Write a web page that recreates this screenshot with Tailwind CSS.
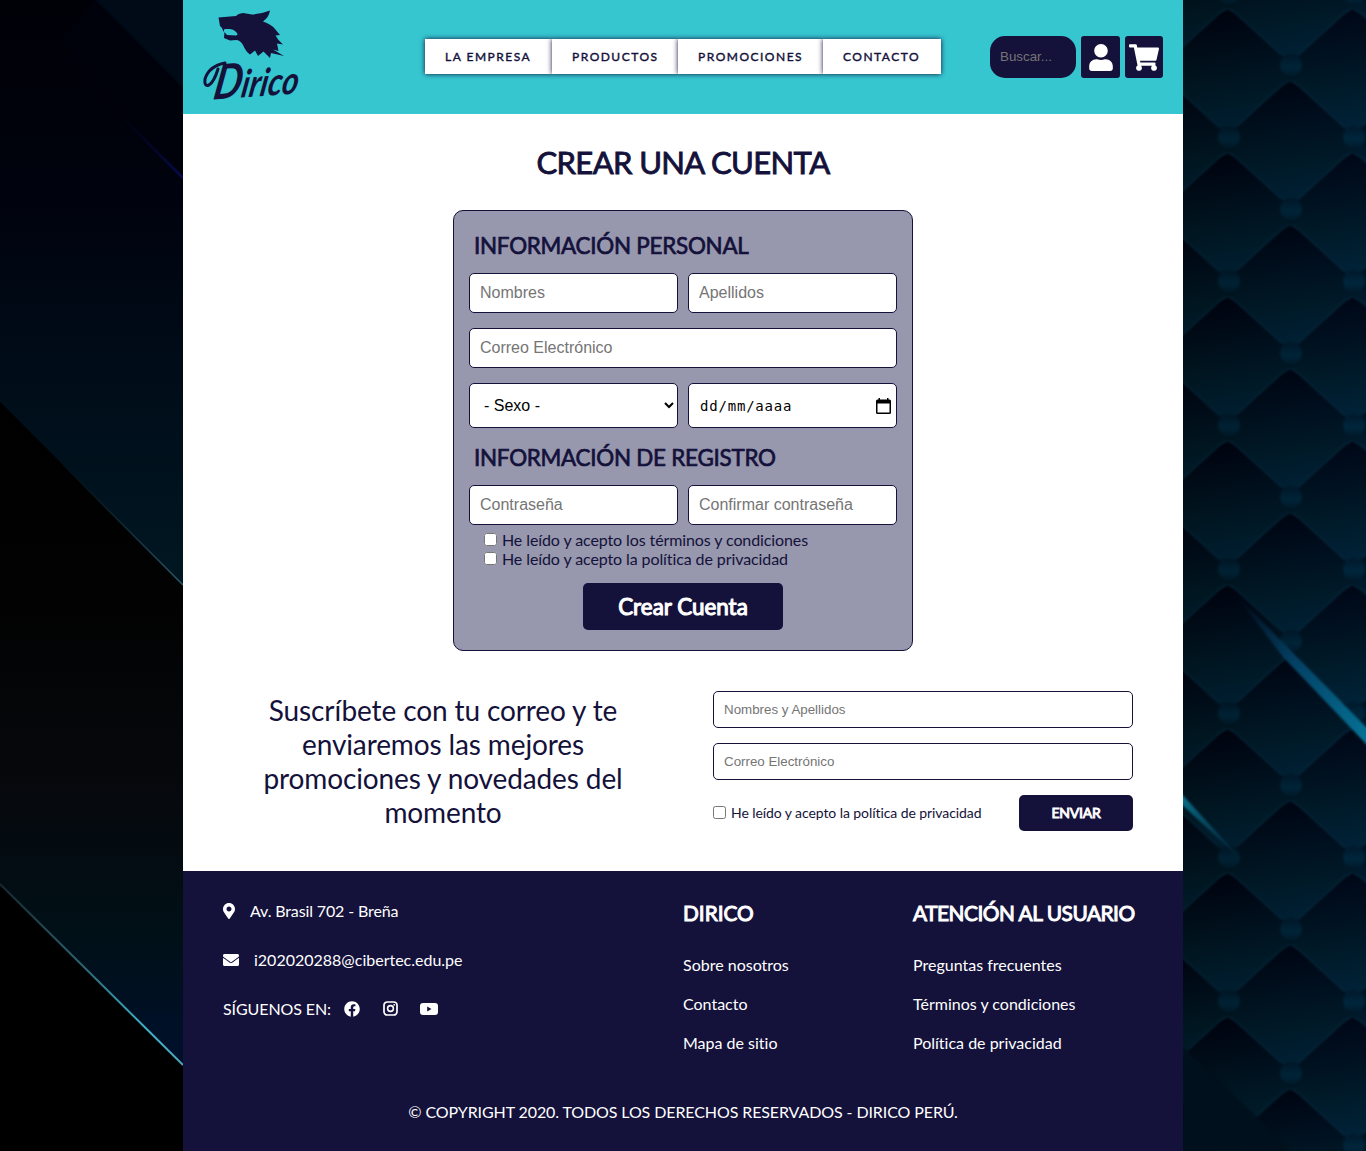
<!DOCTYPE html>
<html lang="es">
<head>
<meta charset="utf-8">
<title>Dirico - Crear una cuenta</title>
<script src="https://cdn.jsdelivr.net/npm/@tailwindcss/browser@4"></script>
</head>
<body class="relative h-[1151px] overflow-hidden bg-black font-['Lato',sans-serif] text-base leading-[19px] text-[#14113a] [font-variant-ligatures:none]">
<!-- Decorative background -->
<svg class="absolute inset-0 -z-0" width="1366" height="1151" aria-hidden="true">
  <defs>
    <linearGradient id="la" x1="0" y1="0" x2="0" y2="1"><stop offset="0" stop-color="#000107"/><stop offset=".35" stop-color="#00030e"/><stop offset=".65" stop-color="#000d19"/><stop offset="1" stop-color="#001722"/></linearGradient>
    <linearGradient id="lb" x1="0" y1="0" x2="0" y2="1"><stop offset="0" stop-color="#000"/><stop offset=".3" stop-color="#020202"/><stop offset=".6" stop-color="#06090d"/><stop offset=".8" stop-color="#001017"/><stop offset="1" stop-color="#00102c"/></linearGradient>
    <linearGradient id="l1" gradientUnits="userSpaceOnUse" x1="0" y1="402" x2="183" y2="585"><stop offset=".3" stop-color="#12303c" stop-opacity="0"/><stop offset="1" stop-color="#2b5c6c"/></linearGradient>
    <linearGradient id="l2" gradientUnits="userSpaceOnUse" x1="0" y1="884" x2="183" y2="1065"><stop offset="0" stop-color="#16272e"/><stop offset=".45" stop-color="#2c6472"/><stop offset=".8" stop-color="#3fb4c8"/><stop offset="1" stop-color="#4da3b8"/></linearGradient>
    <linearGradient id="l3" gradientUnits="userSpaceOnUse" x1="120" y1="115" x2="183" y2="178"><stop offset="0" stop-color="#05063a" stop-opacity="0"/><stop offset="1" stop-color="#070a48"/></linearGradient>
    <linearGradient id="hx" gradientUnits="userSpaceOnUse" x1="0" y1="0" x2="0" y2="129"><stop offset="0" stop-color="#00020b"/><stop offset=".12" stop-color="#000512"/><stop offset=".35" stop-color="#000e1b"/><stop offset=".65" stop-color="#001a26"/><stop offset="1" stop-color="#002338"/></linearGradient>
    <linearGradient id="st" x1="0" y1="0" x2="0" y2="1"><stop offset="0" stop-color="#001626"/><stop offset=".6" stop-color="#00263a"/><stop offset="1" stop-color="#001a2a"/></linearGradient>
    <!-- One upholstery cell, hung from its top point -->
    <g id="cell">
      <path d="M0 0L62.500 57V72L0 129L-62.500 72V57Z" fill="url(#hx)"/>
      <path d="M-54 49L-8 7L0 2L8 7L54 49" fill="none" stroke="#04283a" stroke-width="1.500"/>
    </g>
    <pattern id="quilt" patternUnits="userSpaceOnUse" x="1165" y="6" width="125" height="144">
      <rect width="125" height="144" fill="#00121e"/>
      <use href="#cell" x="0" y="-72"/><use href="#cell" x="125" y="-72"/>
      <use href="#cell" x="62.500" y="0"/>
      <use href="#cell" x="0" y="72"/><use href="#cell" x="125" y="72"/>
      <ellipse cx="64" cy="131" rx="11" ry="11" fill="url(#st)"/>
      <ellipse cx="1" cy="59" rx="11" ry="11" fill="url(#st)"/>
      <ellipse cx="126" cy="59" rx="11" ry="11" fill="url(#st)"/>
    </pattern>
    <linearGradient id="s1" gradientUnits="userSpaceOnUse" x1="1235" y1="596" x2="1366" y2="738"><stop offset="0" stop-color="#033555" stop-opacity="0"/><stop offset=".45" stop-color="#04466c"/><stop offset="1" stop-color="#067fa2"/></linearGradient>
    <linearGradient id="s2" gradientUnits="userSpaceOnUse" x1="1183" y1="799" x2="1238" y2="856"><stop offset="0" stop-color="#0a7f9e"/><stop offset="1" stop-color="#053550" stop-opacity=".6"/></linearGradient>
    <linearGradient id="fade" x1="0" y1="0" x2="1" y2="0"><stop offset="0" stop-color="#000" stop-opacity=".15"/><stop offset="1" stop-color="#00264a" stop-opacity=".15"/></linearGradient>
    <filter id="soft" color-interpolation-filters="sRGB"><feGaussianBlur stdDeviation="1"/></filter>
  </defs>
  <path d="M0 0H183V585L0 402Z" fill="url(#la)"/>
  <path d="M95 0H183V88Z" fill="#000b17"/>
  <path d="M95 0L183 88V178L120 115L60 40Z" fill="#00020b" filter="url(#soft)"/>
  <path d="M120 115L183 178" stroke="url(#l3)" stroke-width="3"/>
  <path d="M0 402L183 585V1065L0 884Z" fill="url(#lb)"/>
  <path d="M0 402L183 585" stroke="url(#l1)" stroke-width="1.500"/>
  <path d="M0 884L183 1065" stroke="url(#l2)" stroke-width="2"/>
  <g filter="url(#soft)">
    <rect x="1175" y="-5" width="200" height="1165" fill="url(#quilt)"/>
    <path d="M1235 594L1370 731V748L1283 657Z" fill="url(#s1)"/>
    <path d="M1180 792L1240 858L1180 803Z" fill="url(#s2)"/>
  </g>
  <rect x="1183" width="183" height="1151" fill="url(#fade)"/>
  <path d="M1183 1047L1260 1120L1290 1151H1183Z" fill="#00101c" filter="url(#soft)"/>
</svg>

<div class="relative mx-auto flex h-[1151px] w-[1000px] flex-col bg-white">
  <header class="flex h-[114px] shrink-0 items-start bg-[#36c6d0] px-5">
    <svg class="mt-[7px] h-[100px] w-[100px] shrink-0 overflow-visible" viewBox="20 7 100 100" role="img" aria-label="Dirico">
      <path fill="#14113a" d="M35.500 17.500L53 16Q55 13.500 60 13L69 14.500Q78 14 87 10.500Q86 17 80 21.500Q88 24 92 29L97 35L92.500 35.500L95.500 40L100 44.500L94 43.500L95.500 51L90 49.500L101 56L88 53L87 58L80.500 51.500L75 56L72 50.500L67 54.500Q63 52 60 45Q57 40 53 40L47 40.500L41 38L41.500 32L44 35L53 35.500Q56 34.500 53 32Q50 28.500 45 29L41.500 29L40.500 32L39 28L37 26Z"/>
      <!-- Flourish to the left of the wordmark -->
      <path d="M42 63Q26 66 22 79Q21 87 26 85Q31 82 35 69" fill="none" stroke="#14113a" stroke-width="3" stroke-linecap="round"/>
      <text transform="translate(29 99.500) rotate(-4) skewX(-14)" fill="#14113a" font-family="Lato" font-style="italic" font-weight="700" font-size="38" textLength="85" lengthAdjust="spacingAndGlyphs"><tspan font-size="48">D</tspan><tspan>irico</tspan></text>
    </svg>
    <nav class="mt-[39px] ml-[122px] flex h-[35px] w-[516px] shrink-0 text-xs leading-[35px] tracking-[1.500px] [-webkit-text-stroke:0.400px_#14113a]">
      <a class="w-[127px] bg-white pl-5 shadow-[0_0_5px_#14113a]">LA EMPRESA</a>
      <a class="w-[126px] bg-white pl-5 shadow-[0_0_5px_#14113a]">PRODUCTOS</a>
      <a class="w-[145px] bg-white pl-5 shadow-[0_0_5px_#14113a]">PROMOCIONES</a>
      <a class="w-[118px] bg-white pl-5 shadow-[0_0_5px_#14113a]">CONTACTO</a>
    </nav>
    <div class="mt-9 ml-auto flex h-[42px] gap-[5px]">
      <input class="w-[86px] rounded-[15px] bg-[#14113a] px-2.5 pb-0.5 font-['Liberation_Sans',sans-serif] text-[13.333px] placeholder:text-[#757575]" placeholder="Buscar...">
      <a class="flex w-[39px] items-center justify-center rounded-[3px] bg-[#14113a]"><svg class="h-[27px] w-6 fill-white" viewBox="0 0 448 512"><path d="M224 256c70.700 0 128-57.300 128-128S294.700 0 224 0 96 57.300 96 128s57.300 128 128 128zm89.600 32h-16.700c-22.200 10.200-46.900 16-72.900 16s-50.600-5.800-72.900-16h-16.700C60.200 288 0 348.200 0 422.400V464c0 26.500 21.500 48 48 48h352c26.500 0 48-21.500 48-48v-41.600c0-74.200-60.200-134.400-134.400-134.400z"/></svg></a>
      <a class="flex w-[38px] items-center justify-center rounded-[3px] bg-[#14113a]"><svg class="h-[27px] w-[30px] fill-white" viewBox="0 0 576 512"><path d="M528.120 301.319l47.273-208C578.806 78.301 567.391 64 551.990 64H159.208l-9.166-44.810C147.758 8.021 137.930 0 126.529 0H24C10.745 0 0 10.745 0 24v16c0 13.255 10.745 24 24 24h69.883l70.248 343.435C147.325 417.100 136 435.222 136 456c0 30.928 25.072 56 56 56s56-25.072 56-56c0-15.674-6.447-29.835-16.824-40h209.647C430.447 426.165 424 440.326 424 456c0 30.928 25.072 56 56 56s56-25.072 56-56c0-22.172-12.888-41.332-31.579-50.405l5.517-24.276c3.413-15.018-8.002-29.319-23.403-29.319H218.117l-6.545-32h293.145c11.206 0 20.920-7.754 23.403-18.681z"/></svg></a>
    </div>
  </header>

  <main class="flex h-[757px] shrink-0 flex-col items-center">
    <h1 class="mt-[29px] text-[31px] leading-[38px] tracking-[-0.620px] [-webkit-text-stroke:0.900px_#14113a]">CREAR UNA CUENTA</h1>
    <form class="mt-[29px] flex h-[441px] w-[460px] flex-col rounded-[10px] border border-[#14113a] bg-[#9797ad] px-[15px]">
      <h2 class="mt-[21px] pl-[5px] text-[22.400px] leading-[27px] tracking-[-0.250px] [-webkit-text-stroke:0.700px_#14113a]">INFORMACIÓN PERSONAL</h2>
      <div class="mt-3.5 grid grid-cols-2 gap-x-2.5 gap-y-[15px] font-['Liberation_Sans',sans-serif] text-base">
        <input class="h-10 min-w-0 rounded-[5px] border border-[#14113a] bg-white px-2.5 placeholder:text-[#757575]" placeholder="Nombres">
        <input class="h-10 min-w-0 rounded-[5px] border border-[#14113a] bg-white px-2.5 placeholder:text-[#757575]" placeholder="Apellidos">
        <input class="col-span-2 h-10 rounded-[5px] border border-[#14113a] bg-white px-2.5 placeholder:text-[#757575]" placeholder="Correo Electrónico">
        <select class="h-[45px] rounded-[5px] border border-[#14113a] bg-white pl-2.5 text-black"><option>- Sexo -</option></select>
        <div class="flex h-[45px] items-center justify-between rounded-[5px] border border-[#14113a] bg-white pr-[5px] pl-[11px] text-black">
          <span class="font-['DejaVu_Sans_Mono',monospace] text-sm tracking-[0.800px]">dd/mm/aaaa</span>
          <svg class="h-4 w-[15px]" viewBox="0 0 15 16"><path fill-rule="evenodd" d="M2.500 0H4V1.500H11V0H12.500V1.500H13.500Q15 1.500 15 3V14.500Q15 16 13.500 16H1.500Q0 16 0 14.500V3Q0 1.500 1.500 1.500H2.500ZM1.500 5.500V14.500H13.500V5.500Z"/></svg>
        </div>
      </div>
      <h2 class="mt-4 pl-[5px] text-[22.400px] leading-[27px] tracking-[-0.250px] [-webkit-text-stroke:0.700px_#14113a]">INFORMACIÓN DE REGISTRO</h2>
      <div class="mt-3.5 grid grid-cols-2 gap-2.5 font-['Liberation_Sans',sans-serif]">
        <input class="h-10 min-w-0 rounded-[5px] border border-[#14113a] bg-white px-2.5 placeholder:text-[#757575]" placeholder="Contraseña">
        <input class="h-10 min-w-0 rounded-[5px] border border-[#14113a] bg-white px-2.5 placeholder:text-[#757575]" placeholder="Confirmar contraseña">
      </div>
      <div class="mt-[5px] pl-[15px] tracking-[-0.100px]">
        <label class="flex h-[19px] items-center"><input type="checkbox" class="mr-[5px] h-[13px] w-[13px]">He leído y acepto los términos y condiciones</label>
        <label class="flex h-[19px] items-center"><input type="checkbox" class="mr-[5px] h-[13px] w-[13px]">He leído y acepto la política de privacidad</label>
      </div>
      <button type="button" class="mt-[15px] h-[47px] w-[200px] self-center rounded-[5px] bg-[#14113a] text-[22.400px] text-white [-webkit-text-stroke:1.100px_#fff]">Crear Cuenta</button>
    </form>

    <section class="mt-10 flex w-full justify-between pr-[50px] pl-[60px]">
      <p class="mt-0.5 w-[400px] text-center text-[28px] leading-[34px] tracking-[-0.120px]">Suscríbete con tu correo y te enviaremos las mejores promociones y novedades del momento</p>
      <div class="flex w-[420px] flex-col gap-[15px]">
        <input class="h-[37px] rounded-[5px] border border-[#14113a] px-2.5 font-['Liberation_Sans',sans-serif] text-[13.333px] placeholder:text-[#757575]" placeholder="Nombres y Apellidos">
        <input class="h-[37px] rounded-[5px] border border-[#14113a] px-2.5 font-['Liberation_Sans',sans-serif] text-[13.333px] placeholder:text-[#757575]" placeholder="Correo Electrónico">
        <div class="flex h-9 items-center justify-between text-sm">
          <label class="flex items-center tracking-[-0.080px]"><input type="checkbox" class="mr-[5px] mb-px h-[13px] w-[13px]">He leído y acepto la política de privacidad</label>
          <button type="button" class="h-9 w-[114px] rounded-[5px] bg-[#14113a] text-sm tracking-[-0.200px] text-white [-webkit-text-stroke:0.900px_#fff]">ENVIAR</button>
        </div>
      </div>
    </section>
  </main>

  <footer class="flex h-[280px] shrink-0 flex-col bg-[#14113a] text-white">
    <div class="flex h-[222px] px-10">
      <div class="mt-[30px] flex w-[460px] flex-col gap-[30px]">
        <div class="flex items-center tracking-[-0.130px]"><svg class="mr-[15px] h-4 w-3 fill-white" viewBox="0 0 384 512"><path d="M172.268 501.670C26.970 291.031 0 269.413 0 192 0 85.961 85.961 0 192 0s192 85.961 192 192c0 77.413-26.970 99.031-172.268 309.670-9.535 13.774-29.930 13.773-39.464 0zM192 272c44.183 0 80-35.817 80-80s-35.817-80-80-80-80 35.817-80 80 35.817 80 80 80z"/></svg>Av. Brasil 702 - Breña</div>
        <div class="flex items-center"><svg class="mr-[15px] h-4 w-4 fill-white" viewBox="0 0 512 512"><path d="M502.300 190.800c3.900-3.100 9.700-.2 9.700 4.700V400c0 26.500-21.500 48-48 48H48c-26.500 0-48-21.500-48-48V195.600c0-5 5.700-7.800 9.700-4.700 22.400 17.400 52.100 39.500 154.100 113.600 21.100 15.400 56.700 47.800 92.200 47.600 35.700.3 72-32.800 92.300-47.600 102-74.100 131.600-96.300 154-113.700zM256 320c23.200.4 56.600-29.200 73.400-41.400 132.700-96.300 142.800-104.700 173.400-128.700 5.800-4.500 9.200-11.500 9.200-18.900v-19c0-26.500-21.500-48-48-48H48c-26.500 0-48 21.500-48 48v19c0 7.400 3.400 14.300 9.200 18.900 30.600 23.900 40.700 32.400 173.400 128.700 16.800 12.200 50.200 41.800 73.400 41.400z"/></svg>i202020288@cibertec.edu.pe</div>
        <div class="flex items-center"><span class="mr-[13px] tracking-[-0.090px]">SÍGUENOS EN:</span>
          <svg class="mr-[23px] h-4 w-4 fill-white" viewBox="0 0 512 512"><path d="M504 256C504 119 393 8 256 8S8 119 8 256c0 123.780 90.690 226.380 209.250 245V327.690h-63V256h63v-54.640c0-62.150 37-96.480 93.670-96.480 27.140 0 55.520 4.840 55.520 4.840v61h-31.280c-30.800 0-40.410 19.120-40.410 38.730V256h68.780l-11 71.690h-57.780V501C413.310 482.380 504 379.780 504 256z"/></svg>
          <svg class="mr-[22px] h-[15px] w-[15px]" viewBox="0 0 15 15"><rect x="1" y="1" width="13" height="13" rx="3.300" fill="none" stroke="#fff" stroke-width="1.700"/><circle cx="7.500" cy="7.500" r="2.900" fill="none" stroke="#fff" stroke-width="1.600"/><circle cx="11.200" cy="3.800" r=".9" fill="#fff"/></svg>
          <svg class="h-3 w-[18px]" viewBox="0 0 18 12"><rect width="18" height="12" rx="3" fill="#fff"/><path d="M7.200 3.500V8.500L11.500 6Z" fill="#14113a"/></svg>
        </div>
      </div>
      <div class="mt-[29px] flex w-[230px] flex-col">
        <h3 class="text-[20.800px] leading-[25px] [-webkit-text-stroke:1px_#fff]">DIRICO</h3>
        <div class="mt-[30px] flex flex-col gap-5"><a>Sobre nosotros</a><a>Contacto</a><a>Mapa de sitio</a></div>
      </div>
      <div class="mt-[29px] flex flex-col whitespace-nowrap">
        <h3 class="text-[20.800px] leading-[25px] tracking-[-0.450px] [-webkit-text-stroke:1px_#fff]">ATENCIÓN AL USUARIO</h3>
        <div class="mt-[30px] flex flex-col gap-5"><a>Preguntas frecuentes</a><a>Términos y condiciones</a><a>Política de privacidad</a></div>
      </div>
    </div>
    <p class="mt-[9px] text-center tracking-[-0.100px]">© COPYRIGHT 2020. TODOS LOS DERECHOS RESERVADOS - DIRICO PERÚ.</p>
  </footer>
</div>
</body>
</html>
